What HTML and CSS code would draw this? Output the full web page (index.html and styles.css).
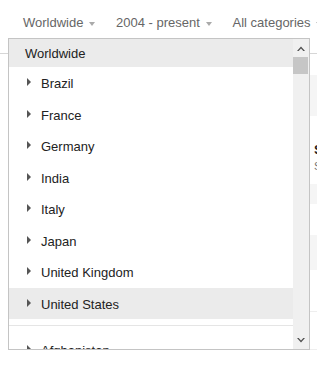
FILE: index.html
```html
<!DOCTYPE html>
<html lang="en">
<head>
  <meta charset="UTF-8">
  <title>Region picker</title>
  <link rel="stylesheet" href="styles.css">
</head>
<body>
  <div class="toolbar">
    <span class="picker">Worldwide <i class="caret"></i></span>
    <span class="picker">2004 - present <i class="caret"></i></span>
    <span class="picker">All categories <i class="caret"></i></span>
  </div>

  <div class="side">
    <div class="band band-top"></div>
    <div class="side-title">Search interest</div>
    <div class="side-sub">Showing results</div>
    <div class="band band-a"></div>
    <div class="band band-b"></div>
    <div class="rule rule-a"></div>
    <div class="rule rule-b"></div>
  </div>

  <!-- menu abierto sobre la pagina -->
  <div class="dropdown">
    <div class="list">
      <div class="head">Worldwide</div>
      <div class="item"><i class="arrow"></i>Brazil</div>
      <div class="item"><i class="arrow"></i>France</div>
      <div class="item"><i class="arrow"></i>Germany</div>
      <div class="item"><i class="arrow"></i>India</div>
      <div class="item"><i class="arrow"></i>Italy</div>
      <div class="item"><i class="arrow"></i>Japan</div>
      <div class="item"><i class="arrow"></i>United Kingdom</div>
      <div class="item hover"><i class="arrow"></i>United States</div>
      <div class="sep"></div>
      <div class="item"><i class="arrow"></i>Afghanistan</div>
      <div class="item"><i class="arrow"></i>Albania</div>
    </div>
    <div class="scrollbar">
      <div class="sb-btn">
        <svg width="8" height="5" viewBox="0 0 8 5"><path d="M0 5 L4 0.5 L8 5 L6.3 5 L4 2.6 L1.7 5 Z" fill="#505050"/></svg>
      </div>
      <div class="sb-thumb"></div>
      <div class="sb-track"></div>
      <div class="sb-btn">
        <svg width="8" height="5" viewBox="0 0 8 5"><path d="M0 0 L4 4.5 L8 0 L6.3 0 L4 2.4 L1.7 0 Z" fill="#505050"/></svg>
      </div>
    </div>
  </div>
</body>
</html>
```

FILE: styles.css
```css
body {
  margin: 0;
  font-family: "Liberation Sans", Arial, sans-serif;
  font-size: 13px;
  color: #222;
  background: #fff;
  overflow: hidden;
}
.toolbar {
  height: 39px;
  padding: 14px 0 0 23px;
  border-bottom: 1px solid #d6d6d6;
  display: flex;
  white-space: nowrap;
  line-height: 18px;
}
.picker {
  color: #666;
  margin-right: 21px;
}
.caret {
  display: inline-block;
  width: 0;
  height: 0;
  margin-left: 2px;
  border-left: 3.5px solid transparent;
  border-right: 3.5px solid transparent;
  border-top: 4px solid #aaa;
  vertical-align: 1px;
}
.side {
  margin-left: 310px;
  white-space: nowrap;
}
.band {
  background: #f5f5f5;
}
.band-top {
  margin-top: 21px;
  height: 41px;
}
.side-title {
  margin-top: 26px;
  padding-left: 4px;
  font-weight: bold;
  line-height: 16px;
}
.side-sub {
  padding-left: 4px;
  color: #777;
  font-size: 11px;
  line-height: 16px;
}
.band-a {
  margin-top: 10px;
  height: 20px;
}
.band-b {
  margin-top: 31px;
  height: 35px;
}
.rule {
  border-top: 1px solid #eee;
}
.rule-a {
  margin-top: 41px;
}
.rule-b {
  margin-top: 37px;
}
.dropdown {
  position: absolute;
  top: 38px;
  left: 8px;
  width: 300px;
  height: 310px;
  border: 1px solid #c4c4c4;
  background: #fff;
  display: flex;
}
.list {
  flex: 1;
  overflow: hidden;
}
.head {
  height: 28px;
  line-height: 29px;
  padding-left: 16px;
  background: #ebebeb;
  color: #222;
}
.item {
  height: 31.5px;
  line-height: 34px;
  padding-left: 18px;
  white-space: nowrap;
}
.item.hover {
  background: #ebebeb;
}
.arrow {
  display: inline-block;
  width: 0;
  height: 0;
  margin-right: 10px;
  border-top: 4px solid transparent;
  border-bottom: 4px solid transparent;
  border-left: 4px solid #555;
  vertical-align: 2px;
}
.sep {
  margin: 6px 0 8px;
  border-top: 1px solid #e5e5e5;
}
.scrollbar {
  width: 16px;
  background: #f0f0f0;
  display: flex;
  flex-direction: column;
}
.sb-btn {
  height: 18px;
  display: flex;
  align-items: center;
  justify-content: center;
}
.sb-thumb {
  height: 17px;
  margin-right: 1px;
  background: #c6c6c6;
}
.sb-track {
  flex: 1;
}
```
